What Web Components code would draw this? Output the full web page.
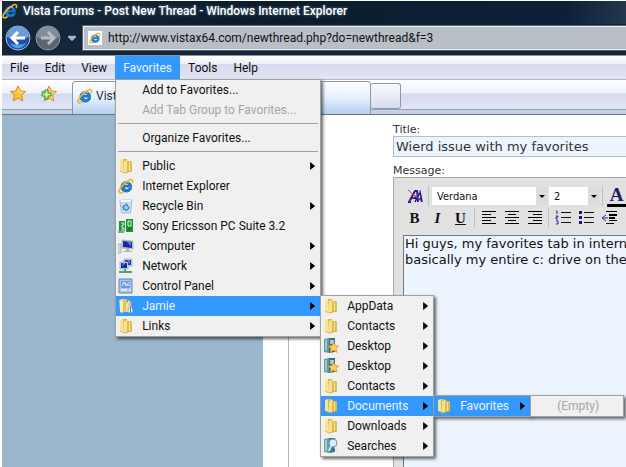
<!DOCTYPE html>
<html lang="en">
<head>
<meta charset="utf-8">
<title>Vista Forums - Post New Thread</title>
<style>
  body {
    margin: 0;
    background: #fff;
    font-family: Roboto, "Noto Sans", sans-serif;
    font-size: 12px;
    color: #111;
  }
</style>
</head>
<body>
<browser-window>
  <title-bar slot="chrome">Vista Forums - Post New Thread - Windows Internet Explorer</title-bar>
  <address-bar slot="chrome" url="http://www.vistax64.com/newthread.php?do=newthread&amp;f=3"></address-bar>
  <menu-bar slot="chrome">
    <menu-title>File</menu-title>
    <menu-title>Edit</menu-title>
    <menu-title>View</menu-title>
    <menu-title open>Favorites
      <menu-panel slot="panel" class="main">
        <menu-item>Add to Favorites...</menu-item>
        <menu-item disabled>Add Tab Group to Favorites...</menu-item>
        <menu-line></menu-line>
        <menu-item>Organize Favorites...</menu-item>
        <menu-line></menu-line>
        <menu-item icon="folder" more>Public</menu-item>
        <menu-item icon="ie">Internet Explorer</menu-item>
        <menu-item icon="bin" more>Recycle Bin</menu-item>
        <menu-item icon="sony">Sony Ericsson PC Suite 3.2</menu-item>
        <menu-item icon="computer" more>Computer</menu-item>
        <menu-item icon="network" more>Network</menu-item>
        <menu-item icon="control" more>Control Panel</menu-item>
        <menu-item icon="user" more open>Jamie
          <menu-panel slot="panel" class="user">
            <menu-item icon="folder" more>AppData</menu-item>
            <menu-item icon="folder" more>Contacts</menu-item>
            <menu-item icon="desktop" more>Desktop</menu-item>
            <menu-item icon="desktop" more>Desktop</menu-item>
            <menu-item icon="folder" more>Contacts</menu-item>
            <menu-item icon="folder" more open>Documents
              <menu-panel slot="panel" class="docs">
                <menu-item icon="folder" more open>Favorites
                  <menu-panel slot="panel" class="empty">
                    <menu-item disabled>(Empty)</menu-item>
                  </menu-panel>
                </menu-item>
              </menu-panel>
            </menu-item>
            <menu-item icon="folder" more>Downloads</menu-item>
            <menu-item icon="search" more>Searches</menu-item>
          </menu-panel>
        </menu-item>
        <menu-item icon="folder" more>Links</menu-item>
      </menu-panel>
    </menu-title>
    <menu-title>Tools</menu-title>
    <menu-title>Help</menu-title>
  </menu-bar>
  <tab-strip slot="chrome">Vist</tab-strip>
  <forum-page></forum-page>
</browser-window>

<script>
const E_LOGO = `
  <path d="M13.6 9.1H6.2c.2 3 3.800 3.200 4.900.9h2.600C12.300 15.600 3 15.500 3 8.700 3 1.900 13.800 1.800 13.600 9.100zM6.300 7.200h4.400c-.3-2.600-4-2.600-4.400 0z" fill="#1d83d3" stroke="#0d5aa8" stroke-width=".8"/>
  <path d="M5 5.600c1.500-2 4.500-2.400 6-.8" fill="none" stroke="#8fd4fa" stroke-width=".9"/>
  <path d="M14.300 4.600c1-2.800-.6-3.800-3.300-2.400C6.500 4.500 1.200 10.300 1.100 13.400c0 2 2 1.700 3.900.6" fill="none" stroke="#efb52a" stroke-width="1.600" stroke-linecap="round"/>`;

const STAR = 'M8 0l2.200 5 5.400.5-4.100 3.500L12.700 15 8 12 3.300 15l1.200-6L.4 5.500 5.800 5z';

const ICONS = {
  ie: E_LOGO,
  folder: `
    <path d="M2 2l3-1 1 13-4-1z" fill="#f9e58c"/>
    <path d="M5 1h4v13l-3 1z" fill="#dcb545"/>
    <path d="M6 3l4-1v12l-4 1z" fill="#f6e28a"/>
    <path d="M9 3h4l1 1v9l-4 1H9z" fill="#dfbc4d"/>
    <path d="M11 4h1v9h-1z" fill="#f7e69a"/>
    <path d="M2 13l4 2 8-2" fill="none" stroke="#c9a63c" stroke-width=".8"/>`,
  user: `
    <path d="M1 2l3-1h5v13l-7-1z" fill="#edd06d"/>
    <path d="M2 2l3 1v12l-3-1z" fill="#fbedaa"/>
    <path d="M5 2l4-1v13H5z" fill="#e6bd62"/>
    <path d="M8 6l3-4 2 3v9H8z" fill="#f4e1a0"/>
    <circle cx="12" cy="6" r="1.600" fill="#e9b08c"/>
    <path d="M10 15c0-9 4-9 5-1z" fill="#f2f6f5" stroke="#6f8f93" stroke-width=".7"/>
    <path d="M12.500 9v5" stroke="#3f7fa5"/>`,
  bin: `
    <path d="M2 3l12-1-1.500 13h-9z" fill="#cfe0f0" stroke="#8ba5bd" stroke-width=".7"/>
    <path d="M1 3l4-2 2 1 3-1 4 1-1 2-9 1z" fill="#f7fbff" stroke="#9fb4c6" stroke-width=".5"/>
    <path d="M5 9l3-3 3 3-1 3H6z" fill="#9cc6ec" stroke="#2b81d0" stroke-width="1.400" stroke-dasharray="3 1"/>`,
  sony: `
    <path d="M1 3h6v10H1zM8 1h7v13H8z" fill="#16962f"/>
    <path d="M3 5h3v2H4v3h2v2H3M10 3h3v5h-3z" fill="none" stroke="#e2f5e2" stroke-width="1"/>
    <path d="M0 14h6M10 11h3" stroke="#075f18"/>`,
  computer: `
    <path d="M0 6h3v9H0z" fill="#d9dde0" stroke="#8c949c" stroke-width=".6"/>
    <path d="M4 2l11 1v8l-11-1z" fill="#c7d1da" stroke="#8996a4" stroke-width=".6"/>
    <path d="M5 3l9 1v6l-9-1z" fill="#1528a8"/>
    <path d="M9 4l4 .5V8z" fill="#658de0"/>
    <path d="M8 11h3v2h3v1H5v-1h3z" fill="#a9b4be"/>`,
  network: `
    <path d="M6 1h8v7H6z" fill="#d6e0e8" stroke="#7f92a5" stroke-width=".6"/>
    <path d="M7 2h6v5H7z" fill="#2038b6"/>
    <path d="M2 4h8v7H2z" fill="#dae4ec" stroke="#7f92a5" stroke-width=".6"/>
    <path d="M3 5h6v5H3z" fill="#152aa3"/>
    <path d="M4 5l3 0-3 3M10 2l2 3" fill="none" stroke="#7fa4ef"/>
    <path d="M7 11v2M1 14h13" stroke="#36ac70" stroke-width="2"/>`,
  control: `
    <path d="M1 1h13v14H1z" fill="#a9c6ec" stroke="#6784ad"/>
    <path d="M3 3h9v7H3z" fill="#6a98d9"/>
    <path d="M4 8l3-4 1 4 3-4M4 5h3M9 7h3" fill="none" stroke="#e4effd"/>
    <path d="M3 12h6M11 12h2" stroke="#f4f8ff" stroke-width="1.500"/>`,
  desktop: `
    <path d="M1 1l5-1v15l-5-1z" fill="#5d9aa4"/>
    <path d="M6 0h6v14l-6 1z" fill="#39737f"/>
    <path d="M2 2l2-.5V13l-2-.5z" fill="#9bc9cc"/>
    <path d="M7 2h4v4H7z" fill="#b7c9bd"/>
    <path d="M10.500 4.500l1.600 3.200 3.600.3-2.700 2.500.9 3.800-3.400-2-3.300 2 .8-3.800-2.700-2.500 3.600-.3z" fill="#ffd15a" stroke="#e58a27" stroke-width=".8"/>`,
  search: `
    <path d="M1 1l5-1v15l-5-1z" fill="#67a0ab"/>
    <path d="M6 0h6v14l-6 1z" fill="#3d7885"/>
    <path d="M2 2l2-.5V13l-2-.5z" fill="#a5cdd2"/>
    <circle cx="10" cy="5" r="4" fill="#d9edf9" stroke="#7890a8"/>
    <path d="M8 8l-2 5M12 9l2 4" stroke="#dbe8f2" stroke-width="2"/>`,
  star: `<path d="${STAR}" fill="#ffc431" stroke="#d88718"/><path d="M8 3l1 3 4 .5" fill="none" stroke="#fff0a8"/>`,
  addstar: `<path d="${STAR}" fill="#ffd460" stroke="#dd8c28"/>
    <path d="M4 4h3v3h3v3H7v3H4v-3H1V7h3z" fill="#c9f3a2" stroke="#27932c"/>`,
  back: `
    <circle cx="13" cy="13" r="12" fill="#1b4fa8" stroke="#a9bdd4"/>
    <path d="M2 12a11 11 0 0 1 22 0c-7 3-15 3-22 0z" fill="#6f9bd8"/>
    <path d="M5 18c4 7 12 7 16 0-5 2-11 2-16 0z" fill="#3fa3ee"/>
    <path d="M13 7l-6 6 6 6M7 13h13" fill="none" stroke="#fff" stroke-width="3"/>`,
  forward: `
    <circle cx="13" cy="13" r="12" fill="#5c6672" stroke="#8b97a4"/>
    <path d="M2 12a11 11 0 0 1 22 0c-7 3-15 3-22 0z" fill="#858e98"/>
    <path d="M13 7l6 6-6 6M19 13H6" fill="none" stroke="#b6bdc5" stroke-width="3"/>`,
  chevron: '<path d="M4 6h8v1l-4 4-4-4z" fill="#8fb8dc" stroke="#c8dded" stroke-width=".8"/>',
  clear: `
    <path d="M1 14h3M2 14l6-11h2l1 11M4 10h6" fill="none" stroke="#1a1a96" stroke-width="1.800"/>
    <path d="M8 14l5-10 2 10M9 11h5" fill="none" stroke="#1a1a96" stroke-width="1.600"/>
    <path d="M1 2l13 11M14 3L2 14" stroke="#d3356d"/>`,
  left: '<path d="M1 1h14v1H1zM1 4h9v1H1zM1 7h14v1H1zM1 10h9v1H1zM1 13h14v1H1z" fill="#000"/>',
  center: '<path d="M1 1h14v1H1zM4 4h8v1H4zM1 7h14v1H1zM4 10h8v1H4zM1 13h14v1H1z" fill="#000"/>',
  right: '<path d="M1 1h14v1H1zM6 4h9v1H6zM1 7h14v1H1zM6 10h9v1H6zM1 13h14v1H1z" fill="#000"/>',
  ordered: '<path d="M6 2h10v1H6zM6 7h10v1H6zM6 12h10v1H6z" fill="#111"/><path d="M1 1h1v3M1 6h2v1H1v2h2M1 11h2v3H1" fill="none" stroke="#24248f"/>',
  bullets: '<path d="M6 2h10v1H6zM6 7h10v1H6zM6 12h10v1H6z" fill="#111"/><path d="M1 1h3v3H1zM1 6h3v3H1zM1 11h3v3H1z" fill="#171782"/>',
  outdent: '<path d="M5 1h11v1H5zM8 4h8v2H8zM8 7h6v2H8zM8 10h8v1H8zM5 13h8v1H5z" fill="#000"/><path d="M5 5L1 8l4 3M1 8h6" fill="none" stroke="#35359b"/>'
};

function icon(name, size = 16) {
  const box = name === 'back' || name === 'forward' ? 26 : 16;
  return `<svg width="${size}" height="${size}" viewBox="0 0 ${box} ${box}" aria-hidden="true">${ICONS[name]}</svg>`;
}

/** Base class: draws its template once into an open shadow root. */
class BaseElement extends HTMLElement {
  constructor() {
    super();
    this.attachShadow({ mode: 'open' });
  }

  connectedCallback() {
    this.shadowRoot.innerHTML = `
      <style>
        * { box-sizing: border-box; }
        button, input, select, textarea { font: inherit; color: inherit; margin: 0; border: 0; padding: 0; background: none; border-radius: 0; }
        svg { display: block; flex: none; }
      </style>
      ${this.template()}
    `;
  }
}

class BrowserWindow extends BaseElement {
  template() {
    return `
      <style>
        :host { display: flex; flex-direction: column; height: 100vh; overflow: hidden; padding: 1px 0 0 2px; box-sizing: border-box; }
        header { flex: none; position: relative; z-index: 1; }
        main { flex: 1; min-height: 0; display: flex; }
      </style>
      <header><slot name="chrome"></slot></header>
      <main><slot></slot></main>
    `;
  }
}

class TitleBar extends BaseElement {
  template() {
    return `
      <style>
        :host { display: flex; align-items: center; gap: 5px; height: 23px; padding-bottom: 4px; box-sizing: border-box; background: linear-gradient(100deg, #15273a, #0c1c2e 40%, #0c2138 90%, #22384c); color: #fff; white-space: nowrap; }
        h1 { margin: 0; font: inherit; font-weight: 500; text-shadow: 0 0 3px #6d8093; }
      </style>
      ${icon('ie')}
      <h1><slot></slot></h1>
    `;
  }
}

class AddressBar extends BaseElement {
  template() {
    return `
      <style>
        :host { display: flex; align-items: flex-start; height: 32px; box-sizing: border-box; background: #13263a; border-bottom: 1px solid #8b949d; }
        nav { display: flex; align-items: center; width: 81px; height: 28px; padding-left: 3px; gap: 4px; }
        .field { flex: 1; display: flex; align-items: center; gap: 6px; height: 24px; margin-top: 2px; padding-left: 4px; background: #b9bfc6; border: 1px solid #e6ecf0; border-right: 0; outline: 1px solid #56636f; }
        .site { background: #fff; padding: 1px; }
        input { flex: 1; min-width: 0; color: #111; outline: 0; }
      </style>
      <nav>
        <button aria-label="Back">${icon('back', 26)}</button>
        <button aria-label="Forward">${icon('forward', 26)}</button>
        <button aria-label="Recent pages">${icon('chevron', 14)}</button>
      </nav>
      <div class="field">
        <span class="site">${icon('ie', 12)}</span>
        <input type="text" aria-label="Address" value="${this.getAttribute('url')}">
      </div>
    `;
  }
}

class MenuBar extends BaseElement {
  template() {
    return `
      <style>
        :host { display: flex; height: 24px; box-sizing: border-box; background: linear-gradient(#fff, #eceefa 35%, #d6daed 36%, #e2e5f4); border-bottom: 1px solid #b3b8c6; position: relative; z-index: 1; }
      </style>
      <slot></slot>
    `;
  }
}

class MenuTitle extends BaseElement {
  template() {
    return `
      <style>
        :host { display: block; position: relative; }
        button { height: 23px; padding: 0 8px; white-space: nowrap; }
        :host([open]) button { background: #3399ff; color: #e9f4ff; }
      </style>
      <button><slot></slot></button>
      <slot name="panel"></slot>
    `;
  }
}

class MenuPanel extends BaseElement {
  template() {
    return `
      <style>
        :host { display: block; position: absolute; top: 100%; left: 0; z-index: 2; box-sizing: border-box; background: #f0f0f0; border: 1px solid #a0a0a0; box-shadow: 2px 2px 3px rgba(0, 0, 0, .6); color: #111; }
        :host(.main) { width: 206px; }
        :host(.user), :host(.docs), :host(.empty) { top: -1px; left: 100%; }
        :host(.user) { width: 114px; }
        :host(.docs) { width: 98px; }
        :host(.empty) { width: 94px; }
      </style>
      <slot></slot>
    `;
  }
}

class MenuItem extends BaseElement {
  template() {
    const name = this.getAttribute('icon');
    return `
      <style>
        :host { display: block; position: relative; }
        button { display: flex; align-items: center; width: 100%; height: 20px; padding: 0 5px 0 2px; white-space: nowrap; text-align: left; }
        .icon { flex: none; width: 16px; margin-right: 8px; }
        .label { flex: 1; }
        .arrow { width: 5px; height: 8px; background: #000; clip-path: polygon(0 0, 100% 50%, 0 100%); }
        :host([open]) button { background: #3399ff; color: #e9f4ff; }
        :host([disabled]) button { color: #a5a5a5; }
      </style>
      <button${this.hasAttribute('disabled') ? ' disabled' : ''}>
        <span class="icon">${name ? icon(name) : ''}</span>
        <span class="label"><slot></slot></span>
        ${this.hasAttribute('more') ? '<span class="arrow"></span>' : ''}
      </button>
      <slot name="panel"></slot>
    `;
  }
}

class MenuLine extends BaseElement {
  template() {
    return `
      <style>
        :host { display: block; padding: 3px 2px 4px; }
        hr { margin: 0; border: 0; height: 1px; background: #a0a0a0; }
      </style>
      <hr>
    `;
  }
}

class TabStrip extends BaseElement {
  template() {
    return `
      <style>
        :host { display: flex; align-items: flex-end; height: 35px; box-sizing: border-box; padding-bottom: 5px; background: linear-gradient(#fff, #f0f2fb 13px, #d5d9ee 14px, #dfe7f5 29px, #8fa3bc 29px, #8fa3bc 30px, #c6d2e2 30px); border-bottom: 1px solid #6b7480; }
        .tools { display: flex; gap: 15px; width: 70px; padding: 0 0 7px 8px; }
        .tab { display: flex; align-items: center; gap: 3px; width: 299px; height: 33px; margin-bottom: -5px; padding: 0 0 4px 4px; background: linear-gradient(#fff, #e4f0fd 50%, #b6cdf3); border: 1px solid #8a98ad; border-bottom: 0; border-radius: 4px 4px 0 0; color: #1c2b42; }
        .new { width: 30px; height: 26px; background: linear-gradient(#f9faff, #d8dced); border: 1px solid #8a98ad; border-left: 0; border-radius: 3px; }
      </style>
      <div class="tools">
        <button aria-label="Favorites Center">${icon('star')}</button>
        <button aria-label="Add to Favorites">${icon('addstar')}</button>
      </div>
      <button class="tab">${icon('ie')}<slot></slot></button>
      <button class="new" aria-label="New Tab"></button>
    `;
  }
}

class ForumPage extends BaseElement {
  template() {
    return `
      <style>
        :host { display: flex; flex: 1; min-width: 0; font-family: Verdana, "DejaVu Sans", sans-serif; font-size: 11px; color: #333; }
        .margin { flex: none; width: 261px; background: #9bb7ce; }
        .sheet { flex: 1; min-width: 0; display: flex; margin-left: 25px; padding: 8px 0 0 104px; border-left: 1px solid #b2b7bd; background: #fff; }
        form { flex: 1; min-width: 0; display: flex; flex-direction: column; }
        label { line-height: 13px; }
        input { height: 21px; padding-left: 2px; border: 1px solid #b4bfca; border-right: 0; background: #ecf5fe; font-size: 13px; outline: 0; }
        .message { margin-top: 7px; }
      </style>
      <div class="margin"></div>
      <div class="sheet">
        <form>
          <label for="title">Title:</label>
          <input id="title" type="text" value="Wierd issue with my favorites">
          <label class="message" id="message">Message:</label>
          <message-editor aria-labelledby="message"></message-editor>
        </form>
      </div>
    `;
  }
}

class MessageEditor extends BaseElement {
  template() {
    return `
      <style>
        :host { flex: 1; min-height: 0; display: flex; flex-direction: column; padding: 7px 0 0 9px; box-sizing: border-box; background: #e1e1e2; border: 1px solid #a6a6a8; border-width: 1px 0 0 1px; color: #111; overflow: hidden; }
        .row { display: flex; align-items: center; flex: none; height: 22px; }
        .row button { display: flex; flex: none; align-items: center; justify-content: center; width: 23px; height: 22px; }
        .glyph { font: bold 15px "Liberation Serif", serif; }
        .color { font: bold 19px/18px "Liberation Serif", serif; color: #1b1b5e; }
        .color span { border-bottom: 3px solid #000; padding: 0 3px; }
        .line { flex: none; width: 1px; height: 20px; margin: 0 2px; background: #c2c2c4; }
        textarea { flex: 1; margin-top: 6px; padding: 0 1px; font-size: 13px; line-height: 16px; background: #ecf5fe; border: 1px solid #77777b; border-width: 1px 0 0 1px; white-space: pre; resize: none; overflow: hidden; outline: 0; }
      </style>
      <div class="row">
        <button type="button" aria-label="Remove formatting">${icon('clear')}</button>
        <span class="line"></span>
        <drop-down class="font" label="Font" value="Verdana"></drop-down>
        <drop-down class="size" label="Size" value="2"></drop-down>
        <span class="line"></span>
        <button type="button" class="color"><span>A</span></button>
      </div>
      <div class="row">
        <button type="button" class="glyph">B</button>
        <button type="button" class="glyph"><i>I</i></button>
        <button type="button" class="glyph"><u>U</u></button>
        <span class="line"></span>
        <button type="button" aria-label="Left">${icon('left')}</button>
        <button type="button" aria-label="Center">${icon('center')}</button>
        <button type="button" aria-label="Right">${icon('right')}</button>
        <span class="line"></span>
        <button type="button" aria-label="Ordered list">${icon('ordered')}</button>
        <button type="button" aria-label="Bullet list">${icon('bullets')}</button>
        <button type="button" aria-label="Outdent">${icon('outdent')}</button>
      </div>
      <textarea aria-label="Message">Hi guys, my favorites tab in intern
basically my entire c: drive on the</textarea>
    `;
  }
}

class DropDown extends BaseElement {
  template() {
    return `
      <style>
        :host { display: flex; flex: none; height: 18px; margin: 0 1px; background: #fff; font-family: Tahoma, "DejaVu Sans Condensed", sans-serif; font-size: 11px; }
        :host(.font) { width: 115px; }
        :host(.size) { width: 50px; }
        select { appearance: none; flex: 1; min-width: 0; padding-left: 5px; outline: 0; }
        .arrow { display: flex; align-items: center; justify-content: center; width: 11px; background: #dcdcde; pointer-events: none; }
        .arrow::before { content: ""; border: 3px solid transparent; border-top-color: #000; border-bottom: 0; }
      </style>
      <select aria-label="${this.getAttribute('label')}"><option>${this.getAttribute('value')}</option></select>
      <span class="arrow"></span>
    `;
  }
}

customElements.define('browser-window', BrowserWindow);
customElements.define('title-bar', TitleBar);
customElements.define('address-bar', AddressBar);
customElements.define('menu-bar', MenuBar);
customElements.define('menu-title', MenuTitle);
customElements.define('menu-panel', MenuPanel);
customElements.define('menu-item', MenuItem);
customElements.define('menu-line', MenuLine);
customElements.define('tab-strip', TabStrip);
customElements.define('forum-page', ForumPage);
customElements.define('message-editor', MessageEditor);
customElements.define('drop-down', DropDown);
</script>
</body>
</html>
